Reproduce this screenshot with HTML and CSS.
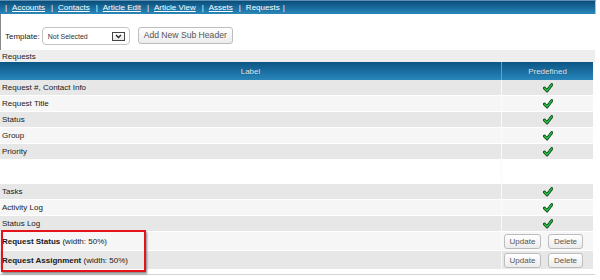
FILE: index.html
```html
<!DOCTYPE html>
<html>
<head>
<meta charset="utf-8">
<link rel="stylesheet" href="styles.css">
</head>
<body>
<svg class="defs" width="0" height="0">
  <defs>
    <symbol id="ck" viewBox="0 0 10 10">
      <path d="M1.5 5.2 L4 7.8 L8.8 1.6" fill="none" stroke="#0d3b14" stroke-width="3" stroke-linecap="round" stroke-linejoin="round"/>
      <path d="M1.5 5.2 L4 7.8 L8.8 1.6" fill="none" stroke="#27c545" stroke-width="1.4" stroke-linecap="round" stroke-linejoin="round"/>
    </symbol>
  </defs>
</svg>
<div class="page">
  <div class="nav">
    <span class="sep">|</span><a class="lnk">Accounts</a>
    <span class="sep">|</span><a class="lnk">Contacts</a>
    <span class="sep">|</span><a class="lnk">Article Edit</a>
    <span class="sep">|</span><a class="lnk">Article View</a>
    <span class="sep">|</span><a class="lnk">Assets</a>
    <span class="sep">|</span><span class="cur">Requests</span>
    <span class="sep">|</span>
  </div>
  <div class="toolbar">
    <span class="tlabel">Template:</span>
    <div class="select">
      <span>Not Selected</span>
      <span class="arrow"><svg width="7" height="5" viewBox="0 0 7 5"><path d="M1 1 L3.5 3.5 L6 1" fill="none" stroke="#222" stroke-width="1.3"/></svg></span>
    </div>
    <button class="btn big">Add New Sub Header</button>
  </div>
  <div class="section">Requests</div>
  <table class="grid">
    <thead>
      <tr><th class="c-label">Label</th><th class="c-pre">Predefined</th></tr>
    </thead>
    <tbody>
      <tr class="d"><td>Request #, Contact Info</td><td class="c-pre"><svg class="chk"><use href="#ck"/></svg></td></tr>
      <tr class="l"><td>Request Title</td><td class="c-pre"><svg class="chk"><use href="#ck"/></svg></td></tr>
      <tr class="d"><td>Status</td><td class="c-pre"><svg class="chk"><use href="#ck"/></svg></td></tr>
      <tr class="l"><td>Group</td><td class="c-pre"><svg class="chk"><use href="#ck"/></svg></td></tr>
      <tr class="d"><td>Priority</td><td class="c-pre"><svg class="chk"><use href="#ck"/></svg></td></tr>
      <tr class="blank"><td></td><td class="c-pre"></td></tr>
      <tr class="d"><td>Tasks</td><td class="c-pre"><svg class="chk"><use href="#ck"/></svg></td></tr>
      <tr class="l"><td>Activity Log</td><td class="c-pre"><svg class="chk"><use href="#ck"/></svg></td></tr>
      <tr class="d"><td>Status Log</td><td class="c-pre"><svg class="chk"><use href="#ck"/></svg></td></tr>
      <tr class="l tall"><td><b>Request Status</b> (width: 50%)</td><td class="c-pre"><div class="acts"><button class="btn">Update</button><button class="btn">Delete</button></div></td></tr>
      <tr class="d tall"><td><b>Request Assignment</b> (width: 50%)</td><td class="c-pre"><div class="acts"><button class="btn">Update</button><button class="btn">Delete</button></div></td></tr>
    </tbody>
  </table>
  <div class="rule"></div>
  <div class="highlight"></div>
</div>
</body>
</html>
```
FILE: styles.css
```css
html, body {
  margin: 0;
  padding: 0;
  background: #fff;
}
body {
  font-family: "Liberation Sans", Arial, sans-serif;
  font-size: 8px;
  color: #1a1a1a;
}
.defs {
  position: absolute;
  width: 0;
  height: 0;
}
.page {
  position: relative;
  width: 600px;
  height: 280px;
}
.nav {
  width: 596px;
  height: 14px;
  box-sizing: border-box;
  background: linear-gradient(#0b4d7a, #1f77a8 70%, #2b87b8);
  border-top: 1px solid #5d8fb2;
  border-right: 1px solid #9cc6df;
  display: flex;
  align-items: center;
  padding-left: 5px;
  color: #fff;
  white-space: nowrap;
}
.sep {
  margin-right: 5px;
}
.lnk {
  text-decoration: underline;
  margin-right: 6px;
}
.cur {
  margin-right: 3px;
}
.toolbar {
  height: 36px;
  box-sizing: border-box;
  border-left: 1px solid #8a8a8a;
  padding: 13px 0 0 4px;
  display: flex;
  align-items: flex-start;
}
.tlabel {
  margin-top: 5px;
  margin-right: 2px;
  color: #222;
}
.select {
  width: 88px;
  height: 18px;
  box-sizing: border-box;
  border: 1px solid #c4c4c4;
  border-radius: 4px;
  background: #fff;
  display: flex;
  align-items: center;
  justify-content: space-between;
  padding: 0 4px 0 5px;
  font-size: 7px;
  color: #333;
}
.arrow {
  width: 13px;
  height: 9px;
  box-sizing: border-box;
  border: 1px solid #444;
  background: linear-gradient(#fff, #e6e6e6);
  display: flex;
  align-items: center;
  justify-content: center;
}
.btn {
  font-family: "Liberation Sans", Arial, sans-serif;
  font-size: 8px;
  color: #555;
  background: linear-gradient(#ffffff, #ececec);
  border: 1px solid #bdbdbd;
  border-radius: 3px;
  height: 15px;
  padding: 0 4px;
  margin: 0;
  line-height: 13px;
}
.btn.big {
  margin-left: 8px;
  height: 17px;
  font-size: 8.6px;
  padding: 0 5px;
  color: #555;
}
.section {
  width: 595px;
  height: 12px;
  background: #eeeeee;
  line-height: 14px;
  padding-left: 2px;
  box-sizing: border-box;
  overflow: hidden;
  color: #222;
}
.grid {
  width: 593px;
  border-collapse: collapse;
  table-layout: fixed;
}
.grid th {
  height: 18px;
  padding: 0;
  font-weight: normal;
  color: #e4edf5;
  text-shadow: 0 0 1px rgba(0, 30, 60, 0.6);
  background: linear-gradient(#0c5584, #1c72a5 60%, #2a86b9);
  text-align: center;
}
.grid th.c-pre {
  border-left: 1px solid #6a9ec3;
}
.grid td {
  height: 15px;
  padding: 0 0 0 2px;
  border-bottom: 1px solid #fff;
  white-space: nowrap;
  color: #1a1a1a;
}
.grid th.c-label {
  width: 501px;
}
.grid .c-pre {
  width: 91px;
  text-align: center;
  border-left: 1px solid #fafafa;
}
.grid td.c-pre {
  padding: 0;
}
tr.d td { background: #e7e7e7; }
tr.l td { background: #f6f6f6; }
tr.blank td {
  height: 23px;
  background: #fff;
  border-left-color: #fff;
}
tr.tall td {
  height: 18px;
}
.chk {
  display: inline-block;
  width: 10px;
  height: 10px;
  vertical-align: middle;
}
.acts {
  display: flex;
  gap: 7px;
  padding-left: 2px;
}
.acts .btn {
  width: 37px;
  padding: 0;
}
.acts .btn + .btn {
  width: 35px;
}
.rule {
  width: 595px;
  margin-top: 4px;
  border-top: 1px solid #d3d3d3;
}
.highlight {
  position: absolute;
  left: 1px;
  top: 230px;
  width: 145px;
  height: 42px;
  box-sizing: border-box;
  border: 2px solid #e5141a;
  box-shadow: 1px 2px 2px rgba(0, 0, 0, 0.45);
  pointer-events: none;
}
```
